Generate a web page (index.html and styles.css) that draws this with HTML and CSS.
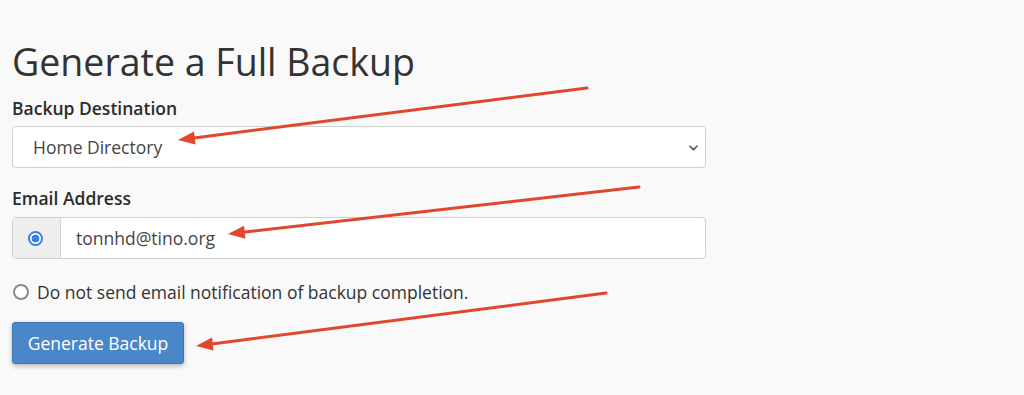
FILE: index.html
```html
<!DOCTYPE html>
<html lang="en">
<head>
<meta charset="utf-8">
<title>Generate a Full Backup</title>
<link rel="stylesheet" href="styles.css">
</head>
<body>
<main class="page">
  <h1 class="title">Generate a Full Backup</h1>
  <label class="field-label">Backup Destination</label>
  <div class="select">
    <span class="select-value">Home Directory</span>
    <svg class="chevron" width="9" height="6" viewBox="0 0 9 6"><path d="M1 1.2 L4.5 4.6 L8 1.2" fill="none" stroke="#555" stroke-width="1.6" stroke-linecap="round" stroke-linejoin="round"/></svg>
  </div>
  <label class="field-label label-email">Email Address</label>
  <div class="input-group">
    <div class="addon"><span class="radio radio-on"></span></div>
    <div class="input">tonnhd@tino.org</div>
  </div>
  <div class="radio-row">
    <span class="radio radio-off"></span>
    <span class="radio-text">Do not send email notification of backup completion.</span>
  </div>
  <button class="btn">Generate Backup</button>
</main>
<svg class="arrows" width="1024" height="395" viewBox="0 0 1024 395">
  <g fill="#e2462c">
    <line x1="587" y1="88" x2="190" y2="138.5" stroke="#e2462c" stroke-width="3" stroke-linecap="round"/>
    <polygon points="178,140 194,131.5 195.5,144.5"/>
    <line x1="639" y1="187" x2="240" y2="232.5" stroke="#e2462c" stroke-width="3" stroke-linecap="round"/>
    <polygon points="228,234 244,225.7 245.5,238.7"/>
    <line x1="606" y1="293" x2="208" y2="344.5" stroke="#e2462c" stroke-width="3" stroke-linecap="round"/>
    <polygon points="196,346 212,337.5 213.5,350.5"/>
  </g>
</svg>
</body>
</html>
```
FILE: styles.css
```css
html, body {
  margin: 0;
  padding: 0;
  background: #f9f9f9;
}
body {
  font-family: "Open Sans", "Liberation Sans", sans-serif;
  color: #333;
  width: 1024px;
  height: 395px;
  overflow: hidden;
  position: relative;
}
.page {
  padding: 39px 0 0 12px;
  width: 694px;
}
.title {
  margin: 0;
  font-size: 37.5px;
  line-height: 46px;
  font-weight: 400;
  color: #333;
}
.field-label {
  display: block;
  margin-top: 12px;
  font-size: 17.5px;
  line-height: 22px;
  font-weight: 600;
  color: #2b2b2b;
}
.label-email {
  margin-top: 19px;
}
.select {
  margin-top: 7px;
  height: 42px;
  box-sizing: border-box;
  border: 1px solid #cfcfcf;
  border-radius: 4px;
  background: #fff;
  display: flex;
  align-items: center;
  justify-content: space-between;
  padding: 0 7px 0 20px;
}
.select-value {
  font-size: 17.5px;
  color: #444;
}
.chevron {
  display: block;
  margin-top: 2px;
}
.input-group {
  margin-top: 8px;
  height: 42px;
  box-sizing: border-box;
  border: 1px solid #cfcfcf;
  border-radius: 4px;
  background: #fff;
  display: flex;
  overflow: hidden;
}
.addon {
  width: 48px;
  background: #eeeeee;
  border-right: 1px solid #d6d6d6;
  display: flex;
  align-items: center;
  justify-content: center;
  flex-shrink: 0;
  padding-right: 3px;
  box-sizing: border-box;
}
.input {
  flex: 1;
  display: flex;
  align-items: center;
  padding-left: 15px;
  font-size: 17.5px;
  color: #444;
}
.radio {
  display: inline-block;
  box-sizing: border-box;
  border-radius: 50%;
}
.radio-on {
  width: 15px;
  height: 15px;
  border: 2px solid #3a7ee6;
  background: radial-gradient(circle, #3a7ee6 0 3.6px, #fff 4.2px);
}
.radio-off {
  width: 16px;
  height: 16px;
  border: 2px solid #8a8a8a;
  background: #fff;
}
.radio-row {
  margin-top: 21px;
  height: 24px;
  display: flex;
  align-items: center;
  gap: 8px;
  margin-left: 1px;
}
.radio-text {
  font-size: 17.5px;
  line-height: 24px;
  color: #333;
}
.btn {
  margin-top: 18px;
  width: 172px;
  height: 42px;
  background: #4a87c8;
  border: 1px solid #3d76b3;
  border-radius: 3px;
  color: #fff;
  font-family: "Open Sans", "Liberation Sans", sans-serif;
  font-size: 17.5px;
  padding: 0;
  box-shadow: 0 2px 5px rgba(0, 0, 0, 0.28);
  display: block;
}
.arrows {
  position: absolute;
  left: 0;
  top: 0;
  pointer-events: none;
}
```
